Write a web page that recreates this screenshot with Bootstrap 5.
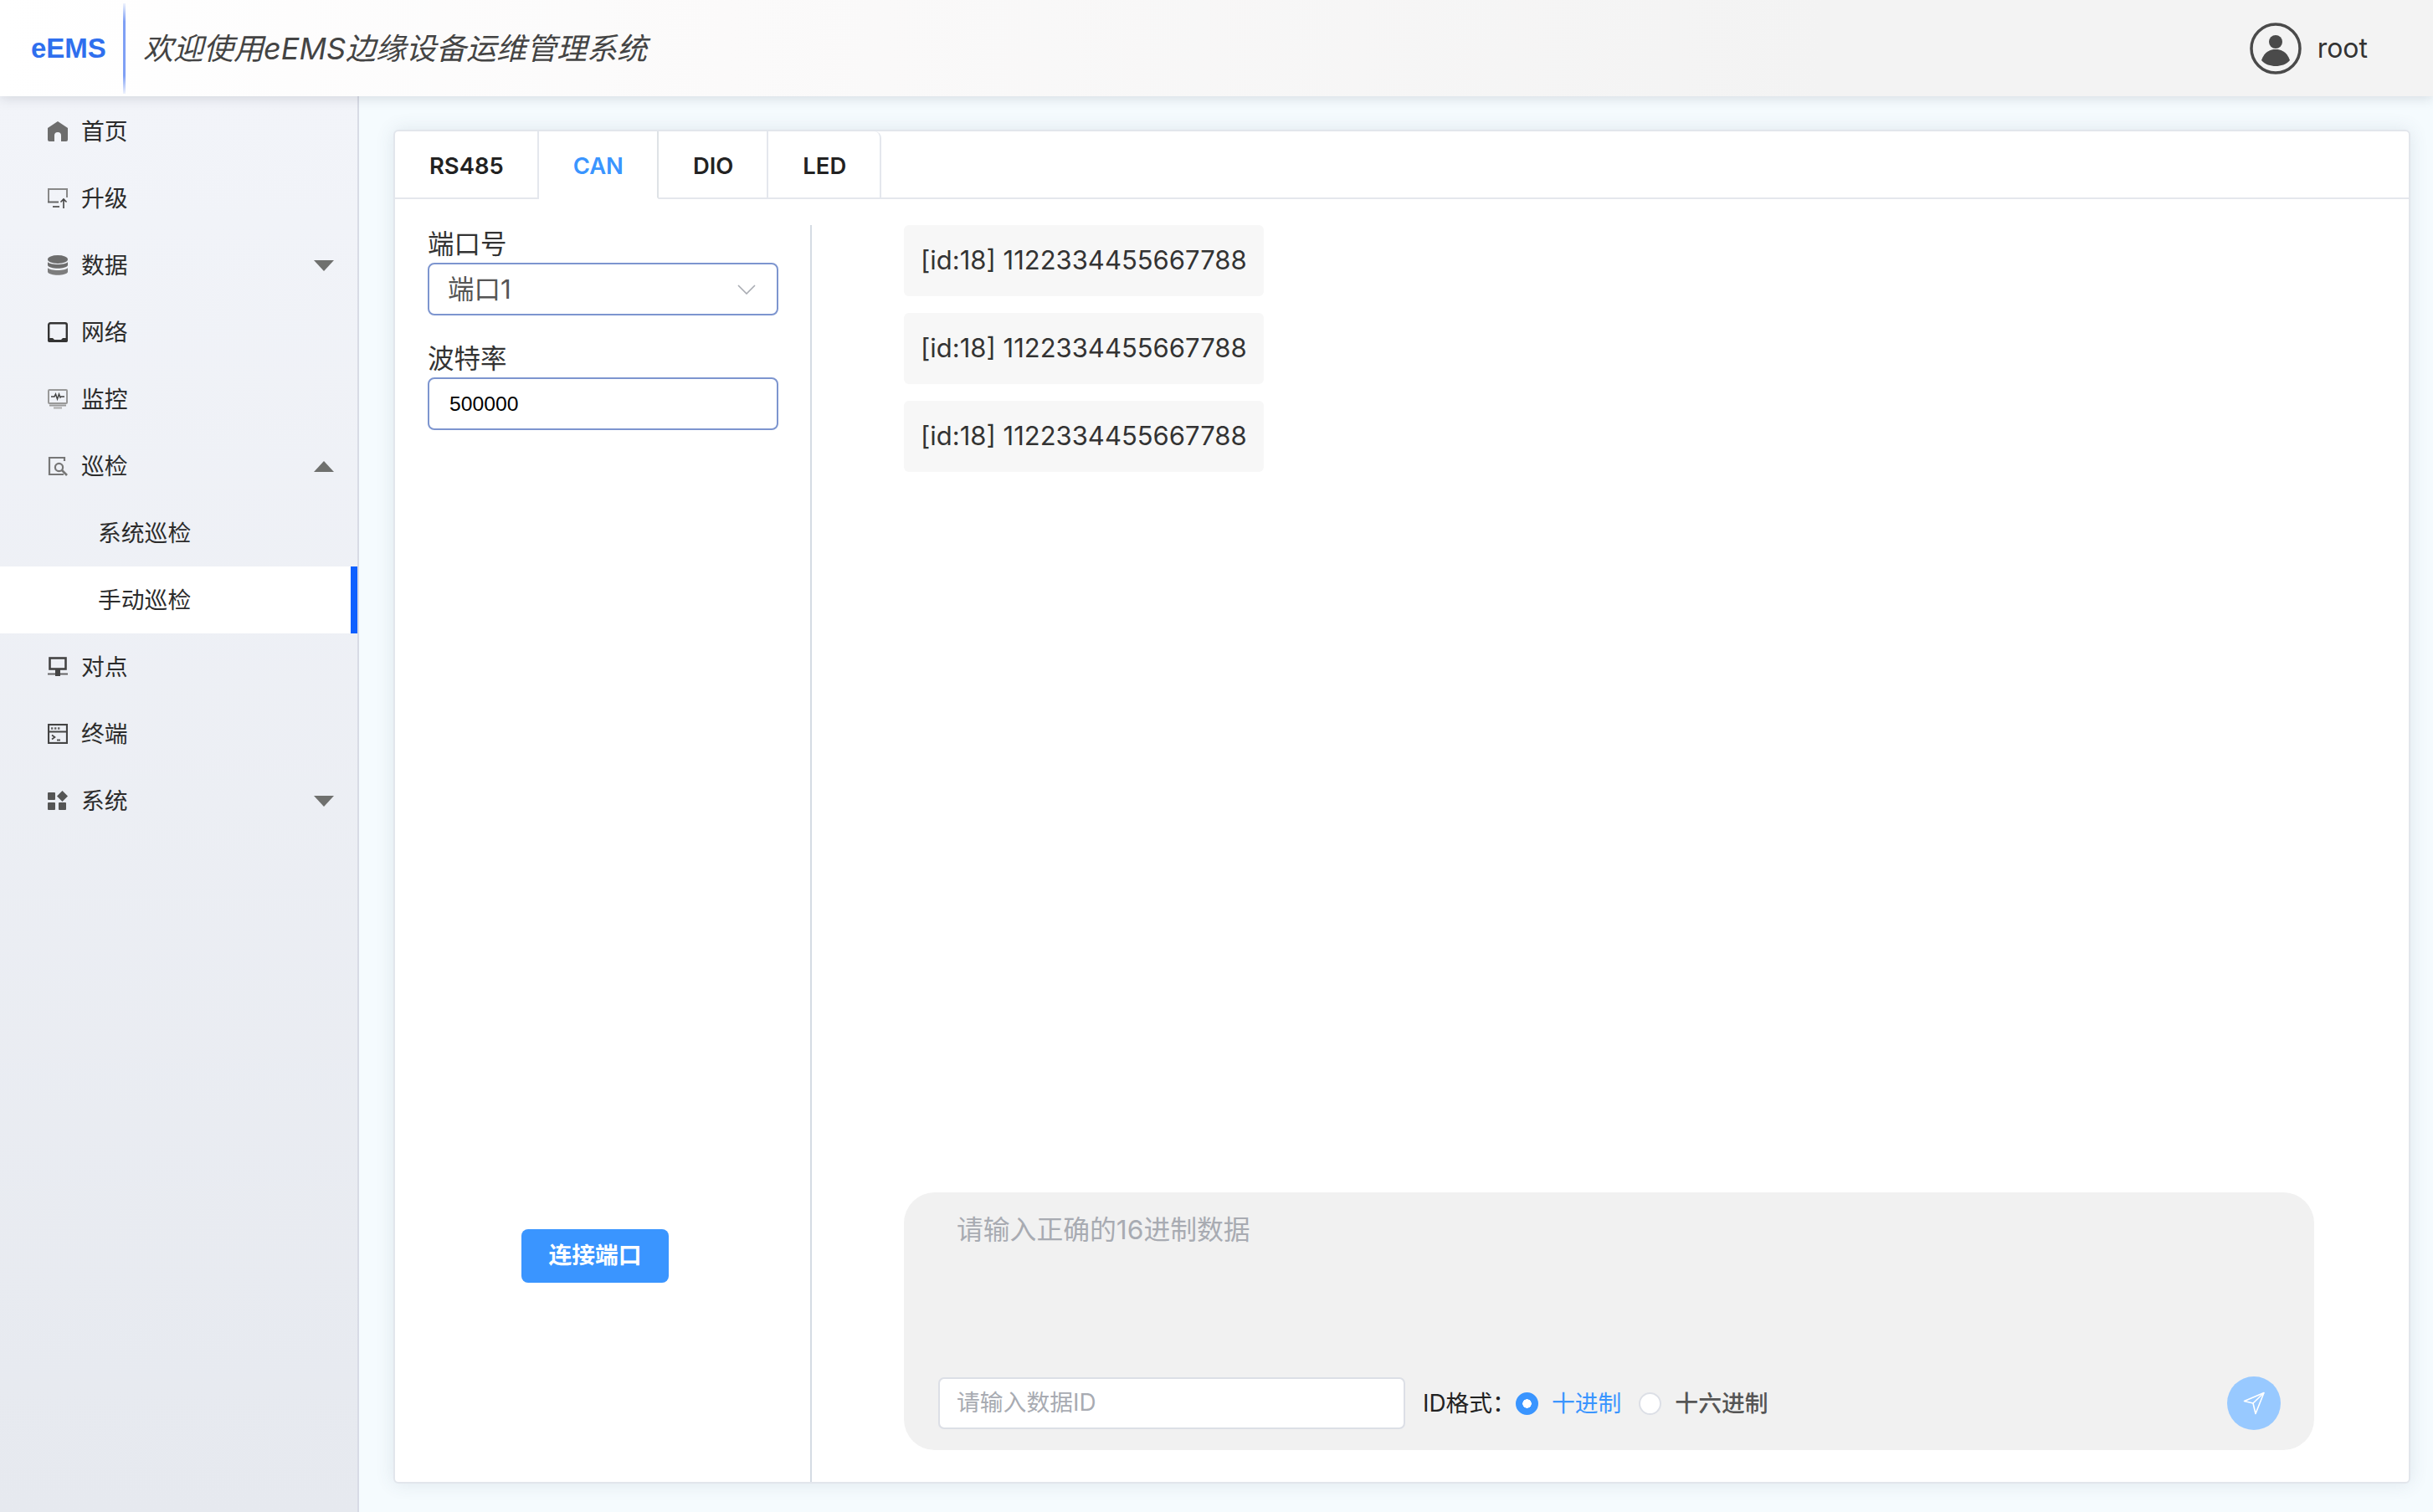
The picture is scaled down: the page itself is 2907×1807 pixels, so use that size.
<!DOCTYPE html>
<html lang="zh-CN">
<head>
    <meta charset="UTF-8">
    <title>eEMS</title>
    <link rel="stylesheet" href="https://cdn.jsdelivr.net/npm/bootstrap@5.3.0/dist/css/bootstrap.min.css">
    <style>
        html, body { height: 100%; }
        body { font-family: Inter, "Noto Sans CJK SC", sans-serif; font-size: 28px; color: #333; background: #f5fbfe; overflow: hidden; }

        /* header */
        .top-bar { height: 115px; background: linear-gradient(90deg, #fff 0, #fbfafa 30%, #f3f3f3 75%); box-shadow: 0 2px 14px rgba(60, 70, 90, .18); position: relative; z-index: 2; flex: none; }
        .logo { font-family: "Liberation Sans", sans-serif; font-size: 33px; font-weight: 700; color: #2f6fee; margin-left: 37px; width: 110px; }
        .logo-line { width: 3px; height: 108px; background: linear-gradient(180deg, rgba(90, 130, 240, .1), #7fa0f5 20%, #7fa0f5 80%, rgba(90, 130, 240, .1)); }
        .welcome { font-size: 36px; font-style: italic; color: #444; margin-left: 21px; }
        .user-name { font-size: 32px; color: #333; margin-left: 19px; margin-right: 78px; }

        /* sidebar */
        .side { width: 429px; flex: none; padding-top: 2px; background: linear-gradient(180deg, #f2f4f9, #e6e9ef); border-right: 2px solid #d8dbe5; }
        .side .nav-link { height: 80px; padding: 0 28px 0 57px; gap: 16px; color: #2c2c2c; font-size: 27.8px; line-height: 1; }
        .side .nav-link > span.txt { padding-top: 2px; }
        .side .nav-link.sub { padding-left: 117px; }
        .side .nav-link.active { background: #fff; border-right: 8px solid #0d5fff; }
        .side svg { width: 24px; height: 24px; flex: none; }
        .tri { width: 0; height: 0; border-left: 12px solid transparent; border-right: 12px solid transparent; margin-left: auto; }
        .tri.down { border-top: 13px solid #6f706e; }
        .tri.up { border-bottom: 13px solid #6f706e; }

        /* main card */
        .main-area { padding: 40px 27px 34px 41px; min-width: 0; }
        .panel { border: 2px solid #e2e6ec; border-radius: 6px; box-shadow: 0 0 22px rgba(60, 80, 110, .12); }
        .panel .nav-tabs { height: 81px; border-bottom: 2px solid #e4e7ed; flex: none; }
        .panel .nav-link { height: 81px; padding: 4px 40px 0 41px; margin: 0; display: flex; align-items: center; color: #222; font-size: 27.4px; font-weight: 600; border: 2px solid #e4e7ed; border-width: 0 2px 2px 0; border-radius: 0; }
        .panel .nav-link.active { color: #3a95ff; border-bottom-color: #fff; background: #fff; }
        .panel .nav-item:last-child .nav-link { border-top-right-radius: 8px; }
        .panel-body { margin-top: 31px; min-height: 0; }

        .left-col { width: 498px; flex: none; padding: 0 38px 0 39px; border-right: 2px solid #d5dbe3; }
        .form-label { font-size: 31.5px; line-height: 45px; margin: 0; color: #333; }
        .form-label.second { margin-top: 29px; }
        .form-select, .form-control.port { height: 63px; border: 2px solid #7d95cf; border-radius: 8px; box-shadow: none; }
        .form-select { font-size: 31.5px; color: #555; padding: 0 22px; line-height: 1; background-size: 22px 12px; background-position: right 25px center; background-image: url("data:image/svg+xml,%3csvg xmlns='http://www.w3.org/2000/svg' viewBox='0 0 22 12'%3e%3cpath fill='none' stroke='%23a8abb2' stroke-width='1.6' d='M1 1l10 10L21 1'/%3e%3c/svg%3e"); }
        .form-control.port { font-family: "Liberation Sans", sans-serif; font-size: 24.7px; color: #000; padding: 0 24px; }
        .btn-connect { width: 176px; height: 64px; margin: 0 0 238px 112px; padding: 0; font-size: 27.8px; font-weight: 600; color: #fff; background: #3a95ff; border: 0; border-radius: 8px; }

        .right-col { padding: 0 113px 38px 110px; min-width: 0; }
        .msg-list { gap: 20px; }
        .msg { height: 85px; padding: 0 20px; background: #f7f7f7; border-radius: 6px; font-size: 31px; color: #333; }

        .composer { height: 308px; flex: none; padding: 0 40px 24px 41px; background: #f1f1f1; border-radius: 37px; }
        .composer textarea { height: 221px; padding: 24px 22px 0; background: transparent; border: 0; box-shadow: none; resize: none; font-size: 31.8px; line-height: 42px; }
        .composer textarea::placeholder, .id-input::placeholder { color: #a8abb2; }
        .id-input { width: 558px; height: 62px; flex: none; padding: 0 20px 2px; border: 2px solid #dcdfe6; border-radius: 7px; font-size: 27.8px; box-shadow: none; }
        .id-label { font-size: 27.8px; margin-left: 21px; padding-top: 1px; color: #222; }
        .form-check-inline { display: inline-flex; align-items: center; margin: 0; padding: 0; min-height: 0; }
        .form-check .form-check-input { width: 27px; height: 27px; margin: 0; float: none; background-color: #fff; border: 2px solid #dcdfe6; box-shadow: none; }
        .form-check .form-check-input:checked { background-color: #3a95ff; border-color: #3a95ff; background-image: radial-gradient(circle, #fff 5px, transparent 5.5px); background-size: auto; }
        .form-check-label { font-size: 27.8px; margin-left: 16px; padding-top: 1px; font-weight: 500; color: #555; }
        .form-check-input:checked + .form-check-label { color: #3a95ff; font-weight: 400; }
        .form-check + .form-check { margin-left: 21px; }
        .send { width: 64px; height: 64px; flex: none; padding: 0; border: 0; border-radius: 50%; background: #98c9ff; margin-left: auto; }
    </style>
</head>
<body class="d-flex flex-column">
<header class="top-bar d-flex align-items-center">
    <div class="logo">eEMS</div>
    <div class="logo-line"></div>
    <div class="welcome">欢迎使用eEMS边缘设备运维管理系统</div>
    <div class="d-flex align-items-center ms-auto">
        <svg width="62" height="62" viewBox="0 0 62 62">
            <circle cx="31" cy="31" r="29" fill="none" stroke="#4a4a4a" stroke-width="3.5"/>
            <circle cx="31" cy="23" r="8" fill="#4a4a4a"/>
            <path d="M14 45 C18 34 25 32 31 32 C37 32 44 34 48 45 C44 50 37 52 31 52 C25 52 18 50 14 45 Z" fill="#4a4a4a"/>
        </svg>
        <span class="user-name">root</span>
    </div>
</header>

<div class="d-flex flex-grow-1" style="min-height:0">
    <nav class="side nav flex-column flex-nowrap">
        <a class="nav-link d-flex align-items-center" href="#">
            <svg viewBox="0 0 24 24"><path fill="#6d6d6d" d="M12 0L24 8V22Q24 24 22 24H16V17Q16 13 12 13Q8 13 8 17V24H2Q0 24 0 22V8Z"/></svg>
            <span class="txt">首页</span>
        </a>
        <a class="nav-link d-flex align-items-center" href="#">
            <svg viewBox="0 0 24 24" fill="none"><path stroke="#888" stroke-width="2" d="M1 16V1H23V11"/><path stroke="#666" stroke-width="2" d="M0 16.5H13M6 22H14"/><path stroke="#444" stroke-width="1.6" d="M19 24V13M15.5 16.5L19 13L22.5 16.5"/></svg>
            <span class="txt">升级</span>
        </a>
        <a class="nav-link d-flex align-items-center" href="#">
            <svg viewBox="0 0 24 24"><ellipse cx="12" cy="5" rx="12" ry="5" fill="#6d6d6d"/><path fill="#6d6d6d" d="M0 8C2 12 22 12 24 8V12C22 17 2 17 0 12Z"/><path fill="#7d7d7d" d="M0 15C2 19 22 19 24 15V20C22 25 2 25 0 20Z"/></svg>
            <span class="txt">数据</span>
            <span class="tri down"></span>
        </a>
        <a class="nav-link d-flex align-items-center" href="#">
            <svg viewBox="0 0 24 24"><rect x="1.2" y="1.2" width="21.6" height="21.6" rx="2" fill="none" stroke="#333" stroke-width="2.4"/><path fill="#333" d="M0 19H6L8 21H16L18 19H24V22A2 2 0 0 1 22 24H2A2 2 0 0 1 0 22Z"/></svg>
            <span class="txt">网络</span>
        </a>
        <a class="nav-link d-flex align-items-center" href="#">
            <svg viewBox="0 0 24 24" fill="none"><rect x="1" y="1" width="22" height="16" rx="1" stroke="#999" stroke-width="2"/><path stroke="#444" stroke-width="1.5" d="M4 9H8L9.5 6L11.5 12L13.5 6L15 10L16 9H20"/><path stroke="#999" stroke-width="2" d="M2 19.5H22"/><path stroke="#aaa" stroke-width="2" d="M7 22.5H17"/></svg>
            <span class="txt">监控</span>
        </a>
        <a class="nav-link d-flex align-items-center" href="#">
            <svg viewBox="0 0 24 24" fill="none" stroke="#777" stroke-width="2.2"><path d="M20 6V2H2V22H19"/><circle cx="13.5" cy="13.5" r="4.6"/><path stroke-width="2.6" d="M17 17L23 23"/></svg>
            <span class="txt">巡检</span>
            <span class="tri up"></span>
        </a>
        <a class="nav-link sub d-flex align-items-center" href="#"><span class="txt">系统巡检</span></a>
        <a class="nav-link sub active d-flex align-items-center" href="#"><span class="txt">手动巡检</span></a>
        <a class="nav-link d-flex align-items-center" href="#">
            <svg viewBox="0 0 24 24" fill="none"><rect x="2.5" y="1.5" width="19" height="13" stroke="#444" stroke-width="2.6"/><path stroke="#666" stroke-width="2" d="M0 20.5H24"/><rect x="9" y="15" width="6" height="8" fill="#444"/></svg>
            <span class="txt">对点</span>
        </a>
        <a class="nav-link d-flex align-items-center" href="#">
            <svg viewBox="0 0 24 24" fill="none"><rect x="1" y="1" width="22" height="22" stroke="#444" stroke-width="2.2"/><path stroke="#444" stroke-width="2" d="M1 9.5H23"/><path stroke="#666" stroke-width="2.4" stroke-dasharray="2.4 1.6" d="M4 5.5H15"/><path stroke="#444" stroke-width="1.6" d="M5 13.5L8.5 16L5 18.5"/><path stroke="#555" stroke-width="2" d="M11 19.5H15"/></svg>
            <span class="txt">终端</span>
        </a>
        <a class="nav-link d-flex align-items-center" href="#">
            <svg viewBox="0 0 24 24" fill="#555"><rect x="0" y="2" width="9" height="9" rx="1"/><rect x="0" y="14" width="9" height="9" rx="1"/><rect x="13" y="14" width="9" height="9" rx="1"/><path d="M17.5 0L24 6.5L17.5 13L11 6.5Z"/></svg>
            <span class="txt">系统</span>
            <span class="tri down"></span>
        </a>
    </nav>

    <main class="main-area flex-grow-1 d-flex">
        <div class="card panel flex-grow-1">
            <ul class="nav nav-tabs flex-nowrap">
                <li class="nav-item"><a class="nav-link" href="#">RS485</a></li>
                <li class="nav-item"><a class="nav-link active" href="#">CAN</a></li>
                <li class="nav-item"><a class="nav-link" href="#">DIO</a></li>
                <li class="nav-item"><a class="nav-link" href="#">LED</a></li>
            </ul>
            <div class="panel-body d-flex flex-grow-1">
                <div class="left-col d-flex flex-column">
                    <label class="form-label">端口号</label>
                    <select class="form-select">
                        <option>端口1</option>
                    </select>
                    <label class="form-label second">波特率</label>
                    <input class="form-control port" type="text" value="500000">
                    <button class="btn btn-connect mt-auto align-self-start" type="button">连接端口</button>
                </div>
                <div class="right-col flex-grow-1 d-flex flex-column">
                    <div class="msg-list d-flex flex-column align-items-start">
                        <div class="msg d-flex align-items-center">[id:18] 1122334455667788</div>
                        <div class="msg d-flex align-items-center">[id:18] 1122334455667788</div>
                        <div class="msg d-flex align-items-center">[id:18] 1122334455667788</div>
                    </div>
                    <div class="composer mt-auto d-flex flex-column">
                        <textarea class="form-control" placeholder="请输入正确的16进制数据"></textarea>
                        <div class="d-flex align-items-center mt-auto">
                            <input class="form-control id-input" type="text" placeholder="请输入数据ID">
                            <span class="id-label">ID格式：</span>
                            <div class="form-check form-check-inline">
                                <input class="form-check-input" type="radio" name="idFormat" id="dec" checked>
                                <label class="form-check-label" for="dec">十进制</label>
                            </div>
                            <div class="form-check form-check-inline">
                                <input class="form-check-input" type="radio" name="idFormat" id="hex">
                                <label class="form-check-label" for="hex">十六进制</label>
                            </div>
                            <button class="send btn d-flex align-items-center justify-content-center" type="button">
                                <svg width="28" height="28" viewBox="0 0 28 28" fill="none" stroke="#fff" stroke-width="1.6" stroke-linejoin="round"><path d="M26 1.5L2.5 11.5L13 14L16 26.5Z"/><path d="M26 1.5L13 14"/></svg>
                            </button>
                        </div>
                    </div>
                </div>
            </div>
        </div>
    </main>
</div>

<script src="https://cdn.jsdelivr.net/npm/bootstrap@5.3.0/dist/js/bootstrap.bundle.min.js"></script>
</body>
</html>
